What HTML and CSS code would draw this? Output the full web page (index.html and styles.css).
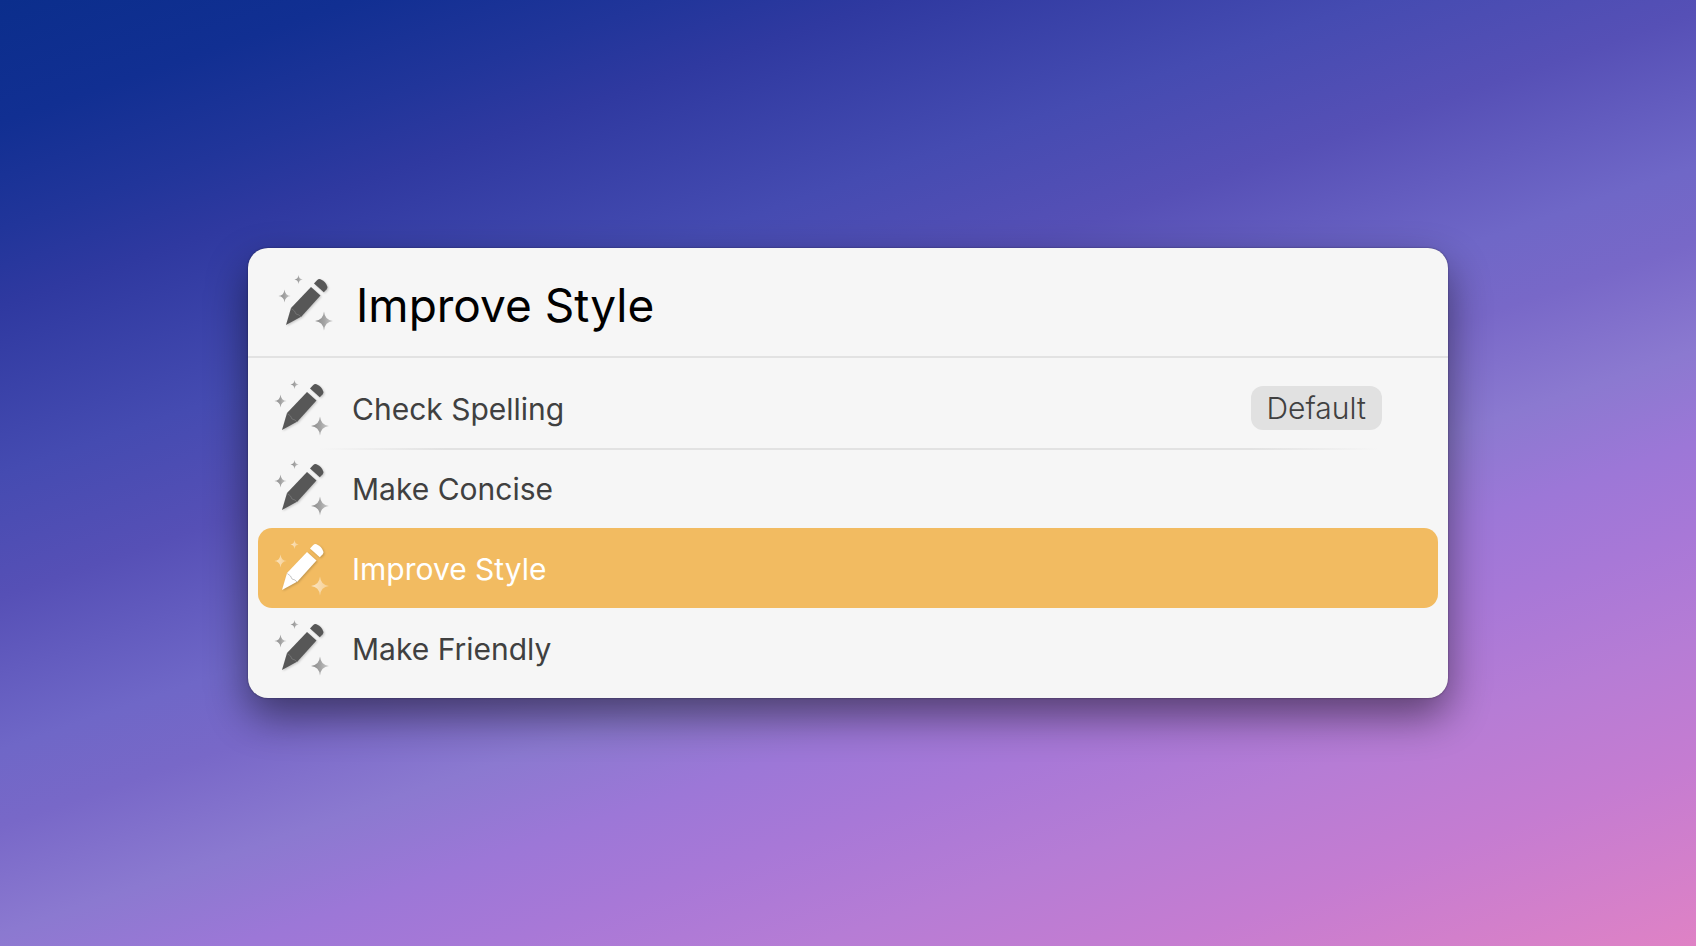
FILE: index.html
```html
<!DOCTYPE html>
<html lang="en">
<head>
<meta charset="utf-8">
<title>Improve Style</title>
<link rel="stylesheet" href="styles.css">
</head>
<body>
<svg class="defs" aria-hidden="true">
  <defs>
    <linearGradient id="spark-grey" x1="0" y1="0" x2="1" y2="0">
      <stop offset="0" stop-color="#8a8a8a"/>
      <stop offset="0.5" stop-color="#a2a2a2"/>
      <stop offset="1" stop-color="#cccccc"/>
    </linearGradient>
    <linearGradient id="spark-light" x1="0" y1="0" x2="1" y2="0">
      <stop offset="0" stop-color="#fbe6c6"/>
      <stop offset="1" stop-color="#f6cf90"/>
    </linearGradient>
    <symbol id="magic-pencil" viewBox="6 6 64 64">
      <g class="pencil">
        <path d="M41 22L50.500 30.500L31.500 51.500L16 60L21 43Z"/>
        <path d="M44 18.500L47 15.200Q48.500 13.700 50.500 14.200Q55.500 16 57.300 21.500Q57.700 23 56.700 24.200L53.800 27.300Z"/>
        <path class="nick" d="M21.300 43.500L24.500 46L26 49L29 50L31 52"/>
      </g>
      <g class="sparks">
        <path d="M28.500 10Q28.800 14.200 32.800 14.500Q28.800 14.800 28.500 19Q28.200 14.800 24.500 14.500Q28.200 14.200 28.500 10Z"/>
        <path d="M14.500 24.500Q15 30.500 20.800 31Q15 31.500 14.500 37.500Q14 31.500 8.500 31Q14 30.500 14.500 24.500Z"/>
        <path d="M54 46.500Q54.800 55.200 63 56Q54.800 56.800 54 65.500Q53.200 56.800 45 56Q53.200 55.200 54 46.500Z"/>
      </g>
    </symbol>
  </defs>
</svg>
<main class="desktop">
  <section class="palette" aria-label="Text actions">
    <header class="search">
      <svg class="icon" aria-hidden="true"><use href="#magic-pencil"/></svg>
      <input class="query" type="text" aria-label="Action" value="Improve Style" spellcheck="false">
    </header>
    <ul class="results">
      <li class="row divided"><button class="action" type="button">
        <svg class="icon" aria-hidden="true"><use href="#magic-pencil"/></svg>
        <span class="label">Check Spelling</span>
        <span class="badge">Default</span>
      </button></li>
      <li class="row"><button class="action" type="button">
        <svg class="icon" aria-hidden="true"><use href="#magic-pencil"/></svg>
        <span class="label">Make Concise</span>
      </button></li>
      <li class="row"><button class="action selected" type="button" aria-current="true">
        <svg class="icon" aria-hidden="true"><use href="#magic-pencil"/></svg>
        <span class="label">Improve Style</span>
      </button></li>
      <li class="row"><button class="action" type="button">
        <svg class="icon" aria-hidden="true"><use href="#magic-pencil"/></svg>
        <span class="label">Make Friendly</span>
      </button></li>
    </ul>
  </section>
</main>
</body>
</html>
```

FILE: styles.css
```css
* { box-sizing: border-box; }

body {
  margin: 0;
  font-family: Inter, "Liberation Sans", sans-serif;
}

.defs {
  position: absolute;
  width: 0;
  height: 0;
}

.desktop {
  display: flex;
  align-items: center;
  justify-content: center;
  min-height: 100vh;
  padding: 24px;
  background: linear-gradient(161deg,
    #0b2e8c 0%,
    #112f92 8%,
    #21359a 15%,
    #2f39a0 20%,
    #454bb1 31%,
    #5650b6 39%,
    #6f67c7 49%,
    #7868c8 54%,
    #8b79d0 61%,
    #9c77d7 67%,
    #a878d7 73%,
    #b67cd5 80%,
    #c57cd1 88%,
    #df82c5 100%);
}

.palette {
  width: 100%;
  max-width: 1200px;
  border-radius: 20px;
  background: #f6f6f6;
  box-shadow:
    0 0 2px rgba(0, 0, 0, 0.45),
    0 18px 42px rgba(0, 0, 0, 0.48);
}

.search {
  display: flex;
  align-items: center;
  gap: 16px;
  height: 110px;
  padding: 2px 28px 0;
  border-bottom: 2px solid #e2e2e2;
}

.icon {
  --spark: url(#spark-grey);
  flex: none;
  width: 64px;
  height: 64px;
  color: #575757;
}

.pencil {
  fill: currentColor;
  filter: drop-shadow(1px 1px 1px rgba(0, 0, 0, 0.2));
}

.nick {
  fill: none;
  stroke: #8c8c8c;
  stroke-width: 0.5;
}

.sparks { fill: var(--spark); }

.query {
  flex: 1;
  min-width: 0;
  padding: 4px 0 0;
  border: 0;
  outline: 0;
  background: none;
  color: #000;
  font: 400 46px/60px Inter, "Liberation Sans", sans-serif;
}

.results {
  margin: 0;
  padding: 10px;
  list-style: none;
}

.row { position: relative; }

.divided::after {
  content: "";
  position: absolute;
  right: 60px;
  bottom: -2px;
  left: 60px;
  height: 2px;
  background: linear-gradient(90deg, transparent, #e2e2e2 12%, #e2e2e2 88%, transparent);
}

.action {
  display: flex;
  align-items: center;
  gap: 16px;
  width: 100%;
  height: 80px;
  padding: 0 56px 0 14px;
  border: 0;
  border-radius: 14px;
  background: none;
  color: #404040;
  font: 400 30px/40px Inter, "Liberation Sans", sans-serif;
  text-align: left;
}

.label {
  flex: 1;
  padding-top: 2px;
}

.badge {
  padding: 2px 16px;
  border-radius: 12px;
  background: #e1e1e1;
  font-weight: 300;
}

.selected { background: #f2bb61; }

.selected,
.selected .icon {
  color: #fff;
}

.selected .icon { --spark: url(#spark-light); }
```
